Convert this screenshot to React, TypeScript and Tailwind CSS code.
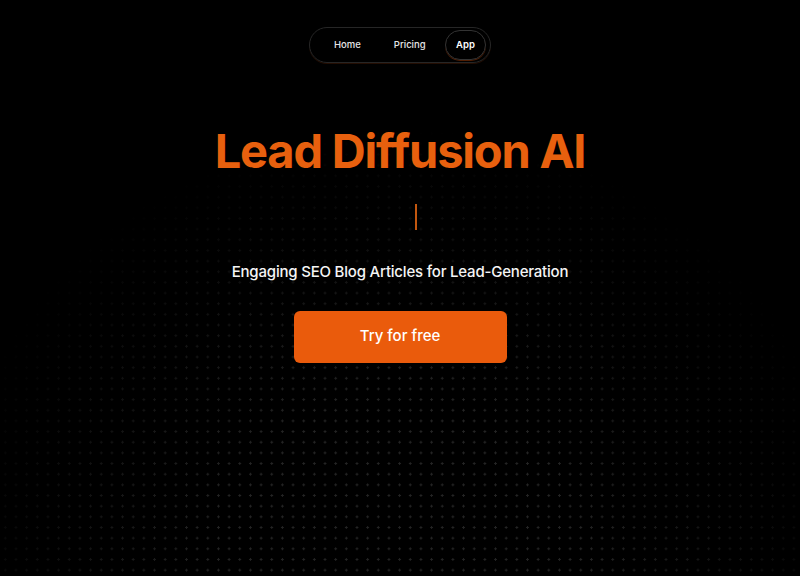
import React from "react";

export default function App() {
	return (
		<div className="relative h-[576px] w-full overflow-hidden bg-black font-['Inter',sans-serif] text-white">
			{/* dot grid background */}
			<div className="pointer-events-none absolute inset-0 bg-[radial-gradient(circle,rgba(255,255,255,0.14)_1px,transparent_1.3px)] bg-[length:10.67px_10.67px] [mask-image:radial-gradient(ellipse_58%_78%_at_50%_100%,black_40%,transparent_100%)]" />

			<div className="relative flex flex-col items-center">
				<nav className="mt-[27px] flex h-[36px] w-[182px] items-center rounded-full border border-[#262626] pl-[24px] pr-[4px] shadow-[0_1px_0_rgba(234,88,12,0.15)]">
					<a className="text-[9.5px] font-medium text-[#e5e5e5]">Home</a>
					<a className="ml-[33px] text-[9.5px] font-medium text-[#e5e5e5]">Pricing</a>
					<a className="ml-auto flex h-[30px] w-[41px] items-center justify-center rounded-full border border-[#333] text-[9.5px] font-semibold text-white shadow-[0_1px_0_rgba(234,88,12,0.35)]">
						App
					</a>
				</nav>

				<h1 className="mt-[64px] text-[47px] font-bold leading-none tracking-[-1.2px] text-[#e8600e]">
					Lead Diffusion AI
				</h1>

				{/* typing cursor */}
				<div className="ml-[32px] mt-[30px] h-[26px] w-[2px] bg-[#c2570f]" />

				<p className="mt-[31px] text-[15px] font-medium tracking-[-0.2px] text-[#f5f5f5]">
					Engaging SEO Blog Articles for Lead-Generation
				</p>

				<button className="mt-[27px] flex h-[52px] w-[213px] items-center justify-center rounded-[6px] bg-[#ea5b0c] text-[15px] font-medium text-white">
					Try for free
				</button>
			</div>
		</div>
	);
}
